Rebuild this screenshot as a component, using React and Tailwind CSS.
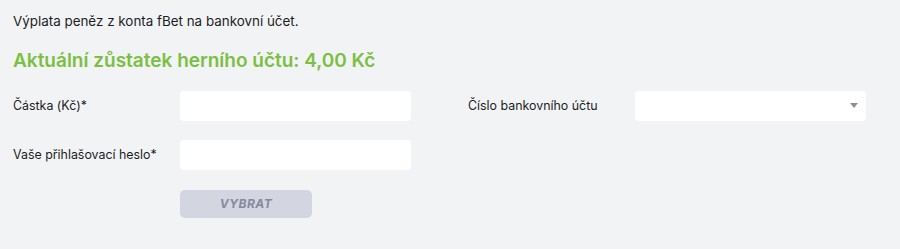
import React from 'react';

const Field = ({ label, children }) => (
  <div className="flex items-center">
    <label className="w-[167px] shrink-0 text-[12.4px] text-[#1d1d1f]">{label}</label>
    {children}
  </div>
);

const App = () => {
  return (
    <div className="w-[900px] h-[249px] bg-[#f2f3f5] px-[13px] pt-[12px] font-['Inter','Noto_Sans',sans-serif]">
      <p className="text-[13.4px] leading-[18px] text-[#1d1d1f]">Výplata peněz z konta fBet na bankovní účet.</p>
      <h2 className="mt-[18px] text-[19px] leading-[25px] font-semibold text-[#7bc043]">
        Aktuální zůstatek herního účtu: 4,00 Kč
      </h2>
      <div className="mt-[18px] flex gap-[57px]">
        <div className="flex flex-col gap-[19px]">
          <Field label="Částka (Kč)*">
            <input className="w-[231px] h-[30px] bg-white rounded-[4px] outline-none px-2 text-[13px]" />
          </Field>
          <Field label="Vaše přihlašovací heslo*">
            <input type="password" className="w-[231px] h-[30px] bg-white rounded-[4px] outline-none px-2 text-[13px]" />
          </Field>
          <div className="pl-[167px] mt-[1px]">
            <button className="w-[132px] h-[28px] rounded-[5px] bg-[#d3d6e1] text-[12px] font-bold italic tracking-[0.5px] text-[#858a9e]">
              VYBRAT
            </button>
          </div>
        </div>
        <div>
          <Field label="Číslo bankovního účtu">
            <div className="relative w-[231px] h-[30px] bg-white rounded-[4px]">
              <svg className="absolute right-[8px] top-[12px]" width="8" height="5" viewBox="0 0 8 5">
                <path d="M0 0 L8 0 L4 5 Z" fill="#8d8f95" />
              </svg>
            </div>
          </Field>
        </div>
      </div>
    </div>
  );
};

export default App;
